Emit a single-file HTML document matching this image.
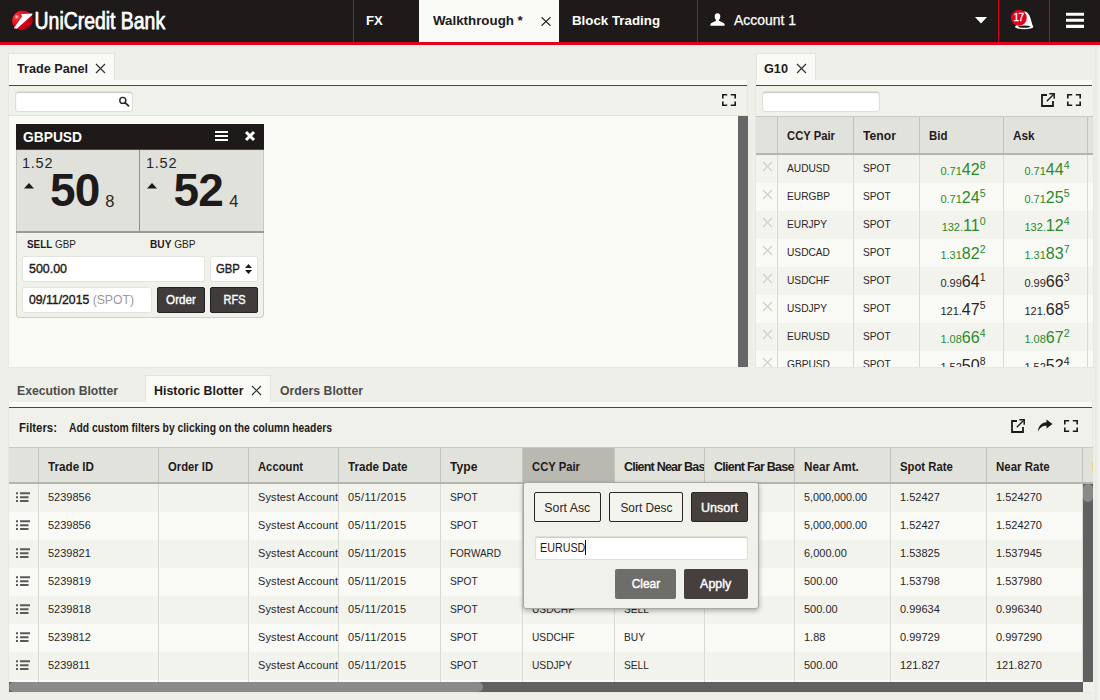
<!DOCTYPE html>
<html><head>
<meta charset="utf-8">
<title>UniCredit Bank</title>
<style>
*{box-sizing:border-box;margin:0;padding:0}
html,body{width:1100px;height:700px;overflow:hidden}
body{background:#efefe9;font-family:"Liberation Sans",sans-serif;color:#1f1a1a;position:relative;font-size:12px}
.abs{position:absolute}
/* header */
#hdr{position:absolute;left:0;top:0;width:1100px;height:42px;background:#1e1a1a}
#hdrline{position:absolute;left:0;top:42px;width:1100px;height:3px;background:#e2001a}
.vline{position:absolute;top:0;width:1px;height:42px;background:#d6001a}
.htab{position:absolute;top:0;height:42px;color:#fff;font-weight:bold;font-size:13.5px;line-height:42px;white-space:nowrap}
#wtab{position:absolute;left:419px;top:0;width:140px;height:42px;background:#f9f9f5}
/* panels */
.ptab{position:absolute;height:28px;background:#f9f9f5;border:1px solid #e4e4de;border-bottom:none;font-weight:bold;font-size:13px;line-height:27px;color:#1f1a1a;white-space:nowrap}
.panel{position:absolute;background:#f1f1eb;border:1px solid #e8e8e2}
.redline{position:absolute;height:1px;background:#e2001a}
.inp{position:absolute;background:#fff;border:1px solid #dfdfd9;border-radius:3px;box-shadow:inset 0 1px 1px rgba(0,0,0,.22)}
.t{position:absolute;white-space:nowrap}
.b{font-weight:bold}
.m{font-weight:normal;-webkit-text-stroke:0.4px}
/* tables */
.th{position:absolute;font-weight:bold;font-size:12.5px;white-space:nowrap}
.clip{overflow:hidden}
#hist .cell,#g10 .cell{line-height:26px}
#g10 .px{line-height:normal}
.row{position:absolute;height:28px}
.cell{position:absolute;font-size:11px;line-height:28px;white-space:nowrap;color:#2a2525}

.cb{position:absolute;width:1px;background:#dadad4}
.px{text-align:right;line-height:normal;height:28px;padding-top:5.5px}
.px .s1{font-size:11px}
.px .s2{font-size:16px}
.px .s3{font-size:10.5px;position:relative;top:-5.5px}
.btn{position:absolute;border-radius:2px;font-size:12.5px;text-align:center;white-space:nowrap}
</style>
</head>
<body>
<!-- HEADER -->
<div id="hdr"></div>
<div id="hdrline"></div>
<div id="wtab"></div>
<div class="vline" style="left:353px"></div>
<div class="vline" style="left:697px"></div>
<div class="vline" style="left:998px"></div>
<div class="vline" style="left:1049px"></div>
<div class="htab" style="left: 366px;"><span style="display: inline-block; transform-origin: 0px 50%; transform: scaleX(0.973);">FX</span></div>
<div class="htab" style="left: 433px; color: rgb(31, 26, 26);"><span style="display: inline-block; transform-origin: 0px 50%; transform: scaleX(0.987);">Walkthrough *</span></div>
<div class="htab" style="left: 572px;"><span style="display: inline-block; transform-origin: 0px 50%; transform: scaleX(0.986);">Block Trading</span></div>
<div class="htab" style="left: 734px; top: -1px; font-weight: normal; font-size: 14px; -webkit-text-stroke: 0.25px;"><span style="display: inline-block; transform-origin: 0px 50%; transform: scaleX(0.996);">Account 1</span></div>

<!-- HEADER ICONS -->
<svg class="abs" style="left:8px;top:6.3px" width="170" height="32" viewBox="8 6 170 32">
<defs><radialGradient id="sg" cx="0.30" cy="0.24" r="0.78"><stop offset="0" stop-color="#ffd0d0"></stop><stop offset="0.16" stop-color="#f0282e"></stop><stop offset="0.6" stop-color="#e2001a"></stop><stop offset="1" stop-color="#a80012"></stop></radialGradient></defs>
<ellipse cx="22.4" cy="20.3" rx="10.5" ry="9.8" fill="url(#sg)" transform="rotate(-20 22.4 20.3)"></ellipse>
<path d="M32.4 13.4 L21 14 L22.2 16.2 L13.8 28.2 L16.8 28.8 L32.2 15 Z" fill="#fff"></path>
<text x="34.6" y="29" font-family="Liberation Sans, sans-serif" font-size="23" fill="#fff" stroke="#fff" stroke-width="0.75" textLength="130.5" lengthAdjust="spacingAndGlyphs">UniCredit Bank</text>
</svg>
<svg class="abs" style="left:541px;top:17px" width="10" height="9" viewBox="0 0 10 9"><path d="M0.5 0.3 L9.5 8.7 M9.5 0.3 L0.5 8.7" stroke="#222" stroke-width="1.2" fill="none"></path></svg>
<svg class="abs" style="left:710px;top:13px" width="15" height="13" viewBox="0 0 15 13"><path d="M7.5 0.3 C9.6 0.3 10.3 2 10.3 3.6 C10.3 5.2 9.6 6.3 9 6.9 L9 7.8 L13.6 9.9 C14.3 10.3 14.6 10.9 14.6 11.6 L14.6 12.7 L0.4 12.7 L0.4 11.6 C0.4 10.9 0.7 10.3 1.4 9.9 L6 7.8 L6 6.9 C5.4 6.3 4.7 5.2 4.7 3.6 C4.7 2 5.4 0.3 7.5 0.3 Z" fill="#fff"></path></svg>
<svg class="abs" style="left:975px;top:17px" width="12" height="7" viewBox="0 0 12 7"><path d="M0 0 H12 L6 6.6 Z" fill="#fff"></path></svg>
<svg class="abs" style="left:1008px;top:8px" width="28" height="24" viewBox="1008 8 28 24">
<path d="M1016 26.5 C1018 22 1018.5 12 1024.5 11.5 C1030.5 12 1031 22 1033 26.5 Z" fill="#fff"></path>
<ellipse cx="1024.2" cy="26.8" rx="9.2" ry="2.4" fill="#fff"></ellipse>
<ellipse cx="1024.2" cy="26.6" rx="6.2" ry="1.2" fill="#1e1a1a"></ellipse>
<circle cx="1018.8" cy="17.8" r="8" fill="#e2001a"></circle>
<text x="1018.5" y="21.3" text-anchor="middle" font-family="Liberation Sans, sans-serif" font-size="10" fill="#fff" stroke="#fff" stroke-width="0.3" letter-spacing="-0.6">17</text>
</svg>
<svg class="abs" style="left:1066px;top:12px" width="18" height="17" viewBox="0 0 18 17"><path d="M0 2.3 H18 M0 8.3 H18 M0 14.4 H18" stroke="#fff" stroke-width="3.1"></path></svg>

<!-- TOP LEFT PANEL -->
<div class="ptab" style="left:8px;top:53px;width:107px"></div>
<div class="t b" style="left: 17px; top: 61px; font-size: 13px;"><span style="display: inline-block; transform-origin: 0px 50%; transform: scaleX(0.973);">Trade Panel</span></div>
<svg class="abs" style="left:95px;top:63px" width="11" height="11" viewBox="0 0 11 11"><path d="M1 1 L10 10 M10 1 L1 10" stroke="#333" stroke-width="1.2" fill="none"></path></svg>
<div class="panel" style="left:8px;top:80px;width:740px;height:288px"></div>
<div class="abs" style="left:9px;top:80px;width:738px;height:5px;background:#f9f9f5"></div>
<div class="redline" style="left:9px;top:85px;width:738px"></div>
<div class="abs" style="left:9px;top:86px;width:738px;height:30px;background:#f1f1eb;border-bottom:1px solid #e2e2dc"></div>
<div class="abs" style="left:9px;top:116px;width:729px;height:251px;background:#f9f9f5"></div>
<div class="abs" style="left:738px;top:116px;width:10px;height:251px;background:#666"></div>
<div class="inp" style="left:15px;top:91px;width:118px;height:21px"></div>
<svg class="abs" style="left:118px;top:96px" width="13" height="11" viewBox="0 0 13 11"><circle cx="4.8" cy="4.4" r="3" stroke="#222" stroke-width="1.4" fill="none"></circle><path d="M7 6.6 L10.6 9.8" stroke="#222" stroke-width="1.7" stroke-linecap="round"></path></svg>
<svg class="abs" style="left:722px;top:94px" width="14" height="12" viewBox="0 0 14 12"><path d="M0.8 4.6 V0.8 H5.2 M8.8 0.8 H13.2 V4.6 M13.2 7.4 V11.2 H8.8 M5.2 11.2 H0.8 V7.4" stroke="#1a1a1a" stroke-width="1.6" fill="none"></path></svg>

<!-- TRADE WIDGET -->
<div class="abs" style="left:16px;top:124px;width:248px;height:25px;background:#1e1a1a"></div>
<div class="abs" style="left:16px;top:149px;width:248px;height:1px;background:#e2001a"></div>
<div class="t b" style="left: 23px; top: 128.5px; font-size: 14px; color: rgb(255, 255, 255);"><span style="display: inline-block; transform-origin: 0px 50%; transform: scaleX(0.985);">GBPUSD</span></div>
<svg class="abs" style="left:215px;top:131px" width="13" height="10" viewBox="0 0 13 10"><path d="M0 1 H13 M0 5 H13 M0 9 H13" stroke="#fff" stroke-width="1.8"></path></svg>
<svg class="abs" style="left:244px;top:130px" width="12" height="12" viewBox="0 0 12 12"><path d="M2 2 L10 10 M10 2 L2 10" stroke="#fff" stroke-width="3"></path></svg>
<div class="abs" style="left:16px;top:150px;width:248px;height:81px;background:#e1e1db;border-left:1px solid #c9c9c3;border-right:1px solid #c9c9c3"></div>
<div class="abs" style="left:139px;top:150px;width:1px;height:81px;background:#8d8d88"></div>
<div class="abs" style="left:16px;top:231px;width:248px;height:2px;background:#9a9a95"></div>
<div class="abs" style="left:16px;top:233px;width:248px;height:85px;background:#f1f1eb;border:1px solid #d0d0ca;border-top:none;border-radius:0 0 4px 4px"></div>
<div class="t" style="left: 22px; top: 155px; font-size: 14.5px; color: rgb(42, 37, 37); letter-spacing: 0.76px;">1.52</div>
<div class="t" style="left: 146px; top: 155px; font-size: 14.5px; color: rgb(42, 37, 37); letter-spacing: 0.76px;">1.52</div>
<svg class="abs" style="left:24px;top:183px" width="10" height="6" viewBox="0 0 10 6"><path d="M0 5.5 L5 0 L10 5.5 Z" fill="#1e1a1a"></path></svg>
<svg class="abs" style="left:147px;top:183px" width="10" height="6" viewBox="0 0 10 6"><path d="M0 5.5 L5 0 L10 5.5 Z" fill="#1e1a1a"></path></svg>
<div class="t b" id="big1" style="left: 50px; top: 163px; font-size: 46px; color: rgb(30, 26, 26); letter-spacing: -0.8px;">50</div>
<div class="t b" id="big2" style="left: 173.5px; top: 163px; font-size: 46px; color: rgb(30, 26, 26); letter-spacing: -0.8px;">52</div>
<div class="t" style="left: 105.3px; top: 192px; font-size: 16.5px; color: rgb(42, 37, 37);">8</div>
<div class="t" style="left: 229.3px; top: 192px; font-size: 16.5px; color: rgb(42, 37, 37);">4</div>
<div class="t" style="left: 27px; top: 238px; font-size: 11px;"><span style="display: inline-block; transform-origin: 0px 50%; transform: scaleX(0.897);"><b>SELL</b> GBP</span></div>
<div class="t" style="left: 150px; top: 238px; font-size: 11px;"><span style="display: inline-block; transform-origin: 0px 50%; transform: scaleX(0.921);"><b>BUY</b> GBP</span></div>
<div class="inp" style="left:22px;top:256px;width:183px;height:26px;box-shadow:none;border-color:#e4e4de"></div>
<div class="t m" style="left: 29px; top: 262px; font-size: 12.5px;"><span style="display: inline-block; transform-origin: 0px 50%; transform: scaleX(0.994);">500.00</span></div>
<div class="inp" style="left:210px;top:256px;width:48px;height:26px;box-shadow:none;border-color:#e4e4de"></div>
<div class="t m" style="left: 216px; top: 262px; font-size: 12.5px;"><span style="display: inline-block; transform-origin: 0px 50%; transform: scaleX(0.905);">GBP</span></div>
<svg class="abs" style="left:245px;top:264px" width="7" height="10" viewBox="0 0 7 10"><path d="M0 3.9 L3.5 0 L7 3.9 Z M0 6.1 L3.5 10 L7 6.1 Z" fill="#1e1a1a"></path></svg>
<div class="inp" style="left:22px;top:287px;width:130px;height:26px;box-shadow:none;border-color:#e4e4de"></div>
<div class="t" style="left: 29px; top: 293px; font-size: 12.5px;"><span style="display: inline-block; transform-origin: 0px 50%; transform: scaleX(0.977);"><span class="m">09/11/2015</span> <span style="color:#999">(SPOT)</span></span></div>
<div class="btn" style="left: 157px; top: 287px; width: 48px; height: 26px; background: rgb(64, 60, 59); border: 1px solid rgb(34, 34, 34); color: rgb(255, 255, 255); line-height: 24px; font-size: 12.5px; font-weight: normal; -webkit-text-stroke: 0.4px;"><span style="display: inline-block; transform-origin: 50% 50%; transform: scaleX(0.933);">Order</span></div>
<div class="btn" style="left: 210px; top: 287px; width: 48px; height: 26px; background: rgb(64, 60, 59); border: 1px solid rgb(34, 34, 34); color: rgb(255, 255, 255); line-height: 24px; font-size: 12.5px; font-weight: normal; -webkit-text-stroke: 0.4px;"><span style="display: inline-block; transform-origin: 50% 50%; transform: scaleX(0.88);">RFS</span></div>

<!-- TOP RIGHT PANEL -->
<div class="ptab" style="left:756px;top:53px;width:60px"></div>
<div class="t b" style="left: 764px; top: 61px; font-size: 13px;"><span style="display: inline-block; transform-origin: 0px 50%; transform: scaleX(0.976);">G10</span></div>
<svg class="abs" style="left:796px;top:63px" width="11" height="11" viewBox="0 0 11 11"><path d="M1 1 L10 10 M10 1 L1 10" stroke="#333" stroke-width="1.2" fill="none"></path></svg>
<div class="panel" style="left:755px;top:80px;width:339px;height:288px"></div>
<div class="abs" style="left:756px;top:80px;width:336px;height:5px;background:#f9f9f5"></div>
<div class="redline" style="left:756px;top:85px;width:336px"></div>
<div class="abs" style="left:756px;top:86px;width:337px;height:30px;background:#f1f1eb"></div>
<div class="inp" style="left:762px;top:91px;width:118px;height:21px"></div>
<svg class="abs" style="left:1041px;top:93px" width="14" height="14" viewBox="0 0 14 14"><path d="M6 2 H1 V13 H12 V8" stroke="#1a1a1a" stroke-width="1.8" fill="none"></path><path d="M5.8 8.2 L13 1" stroke="#1a1a1a" stroke-width="1.3" fill="none"></path><path d="M8.3 0.8 H13.2 V5.7" stroke="#1a1a1a" stroke-width="1.5" fill="none"></path></svg>
<svg class="abs" style="left:1067px;top:94px" width="14" height="12" viewBox="0 0 14 12"><path d="M0.8 4.6 V0.8 H5.2 M8.8 0.8 H13.2 V4.6 M13.2 7.4 V11.2 H8.8 M5.2 11.2 H0.8 V7.4" stroke="#1a1a1a" stroke-width="1.6" fill="none"></path></svg>
<div class="abs" id="g10" style="left:756px;top:116px;width:337px;height:251px;overflow:hidden;background:#f9f9f5">
<div class="abs" style="left:0;top:0;width:337px;height:39px;background:#e2e2dc;border-top:1px solid #c8c8c2;border-bottom:2px solid #b4b4ae"></div>
<div class="row" style="left:0;top:39px;width:337px;background:#f3f3ee"><svg class="abs" style="left:5.5px;top:6px" width="11" height="11" viewBox="0 0 11 11"><path d="M1 1 L10 10 M10 1 L1 10" stroke="#cfcfc9" stroke-width="1.1" fill="none"></path></svg><div class="cell" style="left: 31px;"><span style="display: inline-block; transform-origin: 0px 50%; transform: scaleX(0.925);">AUDUSD</span></div><div class="cell" style="left: 107px;"><span style="display: inline-block; transform-origin: 0px 50%; transform: scaleX(0.925);">SPOT</span></div><div class="cell px" style="left:163.5px;width:66px;color:#2a8a2a"><span class="s1">0.71</span><span class="s2">42</span><span class="s3">8</span></div><div class="cell px" style="left:247.5px;width:66px;color:#2a8a2a"><span class="s1">0.71</span><span class="s2">44</span><span class="s3">4</span></div></div>
<div class="row" style="left:0;top:67px;width:337px;background:#f9f9f5"><svg class="abs" style="left:5.5px;top:6px" width="11" height="11" viewBox="0 0 11 11"><path d="M1 1 L10 10 M10 1 L1 10" stroke="#cfcfc9" stroke-width="1.1" fill="none"></path></svg><div class="cell" style="left: 31px;"><span style="display: inline-block; transform-origin: 0px 50%; transform: scaleX(0.925);">EURGBP</span></div><div class="cell" style="left: 107px;"><span style="display: inline-block; transform-origin: 0px 50%; transform: scaleX(0.925);">SPOT</span></div><div class="cell px" style="left:163.5px;width:66px;color:#2a8a2a"><span class="s1">0.71</span><span class="s2">24</span><span class="s3">5</span></div><div class="cell px" style="left:247.5px;width:66px;color:#2a8a2a"><span class="s1">0.71</span><span class="s2">25</span><span class="s3">5</span></div></div>
<div class="row" style="left:0;top:95px;width:337px;background:#f3f3ee"><svg class="abs" style="left:5.5px;top:6px" width="11" height="11" viewBox="0 0 11 11"><path d="M1 1 L10 10 M10 1 L1 10" stroke="#cfcfc9" stroke-width="1.1" fill="none"></path></svg><div class="cell" style="left: 31px;"><span style="display: inline-block; transform-origin: 0px 50%; transform: scaleX(0.925);">EURJPY</span></div><div class="cell" style="left: 107px;"><span style="display: inline-block; transform-origin: 0px 50%; transform: scaleX(0.925);">SPOT</span></div><div class="cell px" style="left:163.5px;width:66px;color:#2a8a2a"><span class="s1">132.</span><span class="s2">11</span><span class="s3">0</span></div><div class="cell px" style="left:247.5px;width:66px;color:#2a8a2a"><span class="s1">132.</span><span class="s2">12</span><span class="s3">4</span></div></div>
<div class="row" style="left:0;top:123px;width:337px;background:#f9f9f5"><svg class="abs" style="left:5.5px;top:6px" width="11" height="11" viewBox="0 0 11 11"><path d="M1 1 L10 10 M10 1 L1 10" stroke="#cfcfc9" stroke-width="1.1" fill="none"></path></svg><div class="cell" style="left: 31px;"><span style="display: inline-block; transform-origin: 0px 50%; transform: scaleX(0.925);">USDCAD</span></div><div class="cell" style="left: 107px;"><span style="display: inline-block; transform-origin: 0px 50%; transform: scaleX(0.925);">SPOT</span></div><div class="cell px" style="left:163.5px;width:66px;color:#2a8a2a"><span class="s1">1.31</span><span class="s2">82</span><span class="s3">2</span></div><div class="cell px" style="left:247.5px;width:66px;color:#2a8a2a"><span class="s1">1.31</span><span class="s2">83</span><span class="s3">7</span></div></div>
<div class="row" style="left:0;top:151px;width:337px;background:#f3f3ee"><svg class="abs" style="left:5.5px;top:6px" width="11" height="11" viewBox="0 0 11 11"><path d="M1 1 L10 10 M10 1 L1 10" stroke="#cfcfc9" stroke-width="1.1" fill="none"></path></svg><div class="cell" style="left: 31px;"><span style="display: inline-block; transform-origin: 0px 50%; transform: scaleX(0.925);">USDCHF</span></div><div class="cell" style="left: 107px;"><span style="display: inline-block; transform-origin: 0px 50%; transform: scaleX(0.925);">SPOT</span></div><div class="cell px" style="left:163.5px;width:66px;color:#2a2525"><span class="s1">0.99</span><span class="s2">64</span><span class="s3">1</span></div><div class="cell px" style="left:247.5px;width:66px;color:#2a2525"><span class="s1">0.99</span><span class="s2">66</span><span class="s3">3</span></div></div>
<div class="row" style="left:0;top:179px;width:337px;background:#f9f9f5"><svg class="abs" style="left:5.5px;top:6px" width="11" height="11" viewBox="0 0 11 11"><path d="M1 1 L10 10 M10 1 L1 10" stroke="#cfcfc9" stroke-width="1.1" fill="none"></path></svg><div class="cell" style="left: 31px;"><span style="display: inline-block; transform-origin: 0px 50%; transform: scaleX(0.925);">USDJPY</span></div><div class="cell" style="left: 107px;"><span style="display: inline-block; transform-origin: 0px 50%; transform: scaleX(0.925);">SPOT</span></div><div class="cell px" style="left:163.5px;width:66px;color:#2a2525"><span class="s1">121.</span><span class="s2">47</span><span class="s3">5</span></div><div class="cell px" style="left:247.5px;width:66px;color:#2a2525"><span class="s1">121.</span><span class="s2">68</span><span class="s3">5</span></div></div>
<div class="row" style="left:0;top:207px;width:337px;background:#f3f3ee"><svg class="abs" style="left:5.5px;top:6px" width="11" height="11" viewBox="0 0 11 11"><path d="M1 1 L10 10 M10 1 L1 10" stroke="#cfcfc9" stroke-width="1.1" fill="none"></path></svg><div class="cell" style="left: 31px;"><span style="display: inline-block; transform-origin: 0px 50%; transform: scaleX(0.925);">EURUSD</span></div><div class="cell" style="left: 107px;"><span style="display: inline-block; transform-origin: 0px 50%; transform: scaleX(0.925);">SPOT</span></div><div class="cell px" style="left:163.5px;width:66px;color:#2a8a2a"><span class="s1">1.08</span><span class="s2">66</span><span class="s3">4</span></div><div class="cell px" style="left:247.5px;width:66px;color:#2a8a2a"><span class="s1">1.08</span><span class="s2">67</span><span class="s3">2</span></div></div>
<div class="row" style="left:0;top:235px;width:337px;background:#f9f9f5"><svg class="abs" style="left:5.5px;top:6px" width="11" height="11" viewBox="0 0 11 11"><path d="M1 1 L10 10 M10 1 L1 10" stroke="#cfcfc9" stroke-width="1.1" fill="none"></path></svg><div class="cell" style="left: 31px;"><span style="display: inline-block; transform-origin: 0px 50%; transform: scaleX(0.925);">GBPUSD</span></div><div class="cell" style="left: 107px;"><span style="display: inline-block; transform-origin: 0px 50%; transform: scaleX(0.925);">SPOT</span></div><div class="cell px" style="left:163.5px;width:66px;color:#2a2525"><span class="s1">1.52</span><span class="s2">50</span><span class="s3">8</span></div><div class="cell px" style="left:247.5px;width:66px;color:#2a2525"><span class="s1">1.52</span><span class="s2">52</span><span class="s3">4</span></div></div>
<div class="cb" style="left:21px;top:1px;height:36px;background:#c4c4be"></div><div class="cb" style="left:21px;top:39px;height:230px"></div>
<div class="cb" style="left:97px;top:1px;height:36px;background:#c4c4be"></div><div class="cb" style="left:97px;top:39px;height:230px"></div>
<div class="cb" style="left:163px;top:1px;height:36px;background:#c4c4be"></div><div class="cb" style="left:163px;top:39px;height:230px"></div>
<div class="cb" style="left:247px;top:1px;height:36px;background:#c4c4be"></div><div class="cb" style="left:247px;top:39px;height:230px"></div>
<div class="cb" style="left:331px;top:1px;height:36px;background:#c4c4be"></div><div class="cb" style="left:331px;top:39px;height:230px"></div>
<div class="th" style="left: 31px; top: 13px;"><span style="display: inline-block; transform-origin: 0px 50%; transform: scaleX(0.901);">CCY Pair</span></div><div class="th" style="left: 107px; top: 13px;"><span style="display: inline-block; transform-origin: 0px 50%; transform: scaleX(0.973);">Tenor</span></div><div class="th" style="left: 173px; top: 13px;"><span style="display: inline-block; transform-origin: 0px 50%; transform: scaleX(0.914);">Bid</span></div><div class="th" style="left: 257px; top: 13px;"><span style="display: inline-block; transform-origin: 0px 50%; transform: scaleX(0.946);">Ask</span></div>
</div>

<!-- BOTTOM PANEL -->
<div class="t b" style="left: 17px; top: 383px; font-size: 13px; color: rgb(74, 74, 74);"><span style="display: inline-block; transform-origin: 0px 50%; transform: scaleX(0.938);">Execution Blotter</span></div>
<div class="ptab" style="left:145px;top:375px;width:126px;height:28px"></div>
<div class="t b" style="left: 154px; top: 383px; font-size: 13px;"><span style="display: inline-block; transform-origin: 0px 50%; transform: scaleX(0.953);">Historic Blotter</span></div>
<svg class="abs" style="left:251px;top:385px" width="11" height="11" viewBox="0 0 11 11"><path d="M1 1 L10 10 M10 1 L1 10" stroke="#333" stroke-width="1.2" fill="none"></path></svg>
<div class="t b" style="left: 280px; top: 383px; font-size: 13px; color: rgb(74, 74, 74);"><span style="display: inline-block; transform-origin: 0px 50%; transform: scaleX(0.942);">Orders Blotter</span></div>
<div class="panel" style="left:8px;top:402px;width:1085px;height:291px"></div>
<div class="abs" style="left:9px;top:402px;width:1083px;height:5px;background:#f9f9f5"></div>
<div class="redline" style="left:9px;top:407px;width:1083px"></div>
<div class="abs" style="left:9px;top:408px;width:1083px;height:39px;background:#f1f1eb"></div>
<div class="t b" style="left: 19px; top: 421px; font-size: 12px;"><span style="display: inline-block; transform-origin: 0px 50%; transform: scaleX(0.95);">Filters:</span></div>
<div class="t b" style="left: 69px; top: 421px; font-size: 12px;"><span style="display: inline-block; transform-origin: 0px 50%; transform: scaleX(0.861);">Add custom filters by clicking on the column headers</span></div>
<svg class="abs" style="left:1011px;top:419px" width="14" height="14" viewBox="0 0 14 14"><path d="M6 2 H1 V13 H12 V8" stroke="#1a1a1a" stroke-width="1.8" fill="none"></path><path d="M5.8 8.2 L13 1" stroke="#1a1a1a" stroke-width="1.3" fill="none"></path><path d="M8.3 0.8 H13.2 V5.7" stroke="#1a1a1a" stroke-width="1.5" fill="none"></path></svg>
<svg class="abs" style="left:1037px;top:419px" width="16" height="13" viewBox="0 0 16 13"><path d="M9.5 0.5 L15.5 5 L9.5 9.5 V6.8 C5.5 6.6 3 8.5 1 12.5 C1.2 7 4.5 3.6 9.5 3.2 Z" fill="#1a1a1a"></path></svg>
<svg class="abs" style="left:1064px;top:420px" width="14" height="12" viewBox="0 0 14 12"><path d="M0.8 4.6 V0.8 H5.2 M8.8 0.8 H13.2 V4.6 M13.2 7.4 V11.2 H8.8 M5.2 11.2 H0.8 V7.4" stroke="#1a1a1a" stroke-width="1.6" fill="none"></path></svg>
<div class="abs" id="hist" style="left:9px;top:447px;width:1084px;height:245px;overflow:hidden;background:#f9f9f5">
<div class="abs" style="left:0;top:0;width:1084px;height:37px;background:#e2e2dc;border-top:1px solid #c8c8c2;border-bottom:2px solid #b4b4ae"></div>
<div class="abs" style="left:513px;top:1px;width:93px;height:34px;background:#b9b9b2"></div>
<div class="row" style="left:0;top:37px;width:1074px;background:#f3f3ee"><svg class="abs" style="left:7px;top:8px" width="14" height="11" viewBox="0 0 14 11"><path d="M0 1.2 H2 M4 1.2 H14 M0 5.2 H2 M4 5.2 H12.5 M0 9.1 H2 M4 9.1 H12.5" stroke="#5a5a5a" stroke-width="2" fill="none"></path></svg><div class="cell" style="left: 39px; width: 110px;">5239856</div><div class="cell clip" style="left: 249px; width: 80px; letter-spacing: 0.12px;">Systest Account</div><div class="cell" style="left: 339px; width: 92px; letter-spacing: 0.44px;">05/11/2015</div><div class="cell" style="left: 441px; width: 72px;"><span style="display: inline-block; transform-origin: 0px 50%; transform: scaleX(0.925);">SPOT</span></div><div class="cell" style="left: 795px; width: 86px;"><span style="display: inline-block; transform-origin: 0px 50%; transform: scaleX(0.981);">5,000,000.00</span></div><div class="cell" style="left: 891px; width: 86px;">1.52427</div><div class="cell" style="left: 987px; width: 86px;">1.524270</div></div>
<div class="row" style="left:0;top:65px;width:1074px;background:#f9f9f5"><svg class="abs" style="left:7px;top:8px" width="14" height="11" viewBox="0 0 14 11"><path d="M0 1.2 H2 M4 1.2 H14 M0 5.2 H2 M4 5.2 H12.5 M0 9.1 H2 M4 9.1 H12.5" stroke="#5a5a5a" stroke-width="2" fill="none"></path></svg><div class="cell" style="left: 39px; width: 110px;">5239856</div><div class="cell clip" style="left: 249px; width: 80px; letter-spacing: 0.12px;">Systest Account</div><div class="cell" style="left: 339px; width: 92px; letter-spacing: 0.44px;">05/11/2015</div><div class="cell" style="left: 441px; width: 72px;"><span style="display: inline-block; transform-origin: 0px 50%; transform: scaleX(0.925);">SPOT</span></div><div class="cell" style="left: 795px; width: 86px;"><span style="display: inline-block; transform-origin: 0px 50%; transform: scaleX(0.981);">5,000,000.00</span></div><div class="cell" style="left: 891px; width: 86px;">1.52427</div><div class="cell" style="left: 987px; width: 86px;">1.524270</div></div>
<div class="row" style="left:0;top:93px;width:1074px;background:#f3f3ee"><svg class="abs" style="left:7px;top:8px" width="14" height="11" viewBox="0 0 14 11"><path d="M0 1.2 H2 M4 1.2 H14 M0 5.2 H2 M4 5.2 H12.5 M0 9.1 H2 M4 9.1 H12.5" stroke="#5a5a5a" stroke-width="2" fill="none"></path></svg><div class="cell" style="left: 39px; width: 110px;">5239821</div><div class="cell clip" style="left: 249px; width: 80px; letter-spacing: 0.12px;">Systest Account</div><div class="cell" style="left: 339px; width: 92px; letter-spacing: 0.44px;">05/11/2015</div><div class="cell" style="left: 441px; width: 72px;"><span style="display: inline-block; transform-origin: 0px 50%; transform: scaleX(0.907);">FORWARD</span></div><div class="cell" style="left: 795px; width: 86px;">6,000.00</div><div class="cell" style="left: 891px; width: 86px;">1.53825</div><div class="cell" style="left: 987px; width: 86px;">1.537945</div></div>
<div class="row" style="left:0;top:121px;width:1074px;background:#f9f9f5"><svg class="abs" style="left:7px;top:8px" width="14" height="11" viewBox="0 0 14 11"><path d="M0 1.2 H2 M4 1.2 H14 M0 5.2 H2 M4 5.2 H12.5 M0 9.1 H2 M4 9.1 H12.5" stroke="#5a5a5a" stroke-width="2" fill="none"></path></svg><div class="cell" style="left: 39px; width: 110px;">5239819</div><div class="cell clip" style="left: 249px; width: 80px; letter-spacing: 0.12px;">Systest Account</div><div class="cell" style="left: 339px; width: 92px; letter-spacing: 0.44px;">05/11/2015</div><div class="cell" style="left: 441px; width: 72px;"><span style="display: inline-block; transform-origin: 0px 50%; transform: scaleX(0.925);">SPOT</span></div><div class="cell" style="left: 795px; width: 86px;">500.00</div><div class="cell" style="left: 891px; width: 86px;">1.53798</div><div class="cell" style="left: 987px; width: 86px;">1.537980</div></div>
<div class="row" style="left:0;top:149px;width:1074px;background:#f3f3ee"><svg class="abs" style="left:7px;top:8px" width="14" height="11" viewBox="0 0 14 11"><path d="M0 1.2 H2 M4 1.2 H14 M0 5.2 H2 M4 5.2 H12.5 M0 9.1 H2 M4 9.1 H12.5" stroke="#5a5a5a" stroke-width="2" fill="none"></path></svg><div class="cell" style="left: 39px; width: 110px;">5239818</div><div class="cell clip" style="left: 249px; width: 80px; letter-spacing: 0.12px;">Systest Account</div><div class="cell" style="left: 339px; width: 92px; letter-spacing: 0.44px;">05/11/2015</div><div class="cell" style="left: 441px; width: 72px;"><span style="display: inline-block; transform-origin: 0px 50%; transform: scaleX(0.925);">SPOT</span></div><div class="cell" style="left: 523px; width: 82px;"><span style="display: inline-block; transform-origin: 0px 50%; transform: scaleX(0.925);">USDCHF</span></div><div class="cell" style="left: 615px; width: 80px;"><span style="display: inline-block; transform-origin: 0px 50%; transform: scaleX(0.925);">SELL</span></div><div class="cell" style="left: 795px; width: 86px;">500.00</div><div class="cell" style="left: 891px; width: 86px;">0.99634</div><div class="cell" style="left: 987px; width: 86px;">0.996340</div></div>
<div class="row" style="left:0;top:177px;width:1074px;background:#f9f9f5"><svg class="abs" style="left:7px;top:8px" width="14" height="11" viewBox="0 0 14 11"><path d="M0 1.2 H2 M4 1.2 H14 M0 5.2 H2 M4 5.2 H12.5 M0 9.1 H2 M4 9.1 H12.5" stroke="#5a5a5a" stroke-width="2" fill="none"></path></svg><div class="cell" style="left: 39px; width: 110px;">5239812</div><div class="cell clip" style="left: 249px; width: 80px; letter-spacing: 0.12px;">Systest Account</div><div class="cell" style="left: 339px; width: 92px; letter-spacing: 0.44px;">05/11/2015</div><div class="cell" style="left: 441px; width: 72px;"><span style="display: inline-block; transform-origin: 0px 50%; transform: scaleX(0.925);">SPOT</span></div><div class="cell" style="left: 523px; width: 82px;"><span style="display: inline-block; transform-origin: 0px 50%; transform: scaleX(0.925);">USDCHF</span></div><div class="cell" style="left: 615px; width: 80px;"><span style="display: inline-block; transform-origin: 0px 50%; transform: scaleX(0.925);">BUY</span></div><div class="cell" style="left: 795px; width: 86px;">1.88</div><div class="cell" style="left: 891px; width: 86px;">0.99729</div><div class="cell" style="left: 987px; width: 86px;">0.997290</div></div>
<div class="row" style="left:0;top:205px;width:1074px;background:#f3f3ee"><svg class="abs" style="left:7px;top:8px" width="14" height="11" viewBox="0 0 14 11"><path d="M0 1.2 H2 M4 1.2 H14 M0 5.2 H2 M4 5.2 H12.5 M0 9.1 H2 M4 9.1 H12.5" stroke="#5a5a5a" stroke-width="2" fill="none"></path></svg><div class="cell" style="left: 39px; width: 110px;">5239811</div><div class="cell clip" style="left: 249px; width: 80px; letter-spacing: 0.12px;">Systest Account</div><div class="cell" style="left: 339px; width: 92px; letter-spacing: 0.44px;">05/11/2015</div><div class="cell" style="left: 441px; width: 72px;"><span style="display: inline-block; transform-origin: 0px 50%; transform: scaleX(0.925);">SPOT</span></div><div class="cell" style="left: 523px; width: 82px;"><span style="display: inline-block; transform-origin: 0px 50%; transform: scaleX(0.925);">USDJPY</span></div><div class="cell" style="left: 615px; width: 80px;"><span style="display: inline-block; transform-origin: 0px 50%; transform: scaleX(0.925);">SELL</span></div><div class="cell" style="left: 795px; width: 86px;">500.00</div><div class="cell" style="left: 891px; width: 86px;">121.827</div><div class="cell" style="left: 987px; width: 86px;">121.8270</div></div>
<div class="cb" style="left:29px;top:1px;height:34px;background:#c4c4be"></div><div class="cb" style="left:29px;top:37px;height:198px"></div>
<div class="cb" style="left:149px;top:1px;height:34px;background:#c4c4be"></div><div class="cb" style="left:149px;top:37px;height:198px"></div>
<div class="cb" style="left:239px;top:1px;height:34px;background:#c4c4be"></div><div class="cb" style="left:239px;top:37px;height:198px"></div>
<div class="cb" style="left:329px;top:1px;height:34px;background:#c4c4be"></div><div class="cb" style="left:329px;top:37px;height:198px"></div>
<div class="cb" style="left:431px;top:1px;height:34px;background:#c4c4be"></div><div class="cb" style="left:431px;top:37px;height:198px"></div>
<div class="cb" style="left:513px;top:1px;height:34px;background:#c4c4be"></div><div class="cb" style="left:513px;top:37px;height:198px"></div>
<div class="cb" style="left:605px;top:1px;height:34px;background:#c4c4be"></div><div class="cb" style="left:605px;top:37px;height:198px"></div>
<div class="cb" style="left:695px;top:1px;height:34px;background:#c4c4be"></div><div class="cb" style="left:695px;top:37px;height:198px"></div>
<div class="cb" style="left:785px;top:1px;height:34px;background:#c4c4be"></div><div class="cb" style="left:785px;top:37px;height:198px"></div>
<div class="cb" style="left:881px;top:1px;height:34px;background:#c4c4be"></div><div class="cb" style="left:881px;top:37px;height:198px"></div>
<div class="cb" style="left:977px;top:1px;height:34px;background:#c4c4be"></div><div class="cb" style="left:977px;top:37px;height:198px"></div>
<div class="cb" style="left:1073px;top:1px;height:34px;background:#c4c4be"></div><div class="cb" style="left:1073px;top:37px;height:198px"></div>
<div class="th" style="left: 39px; top: 13px; width: 110px;"><span style="display: inline-block; transform-origin: 0px 50%; transform: scaleX(0.933);">Trade ID</span></div><div class="th" style="left: 159px; top: 13px; width: 80px;"><span style="display: inline-block; transform-origin: 0px 50%; transform: scaleX(0.9);">Order ID</span></div><div class="th" style="left: 249px; top: 13px; width: 80px;"><span style="display: inline-block; transform-origin: 0px 50%; transform: scaleX(0.9);">Account</span></div><div class="th" style="left: 339px; top: 13px; width: 92px;"><span style="display: inline-block; transform-origin: 0px 50%; transform: scaleX(0.931);">Trade Date</span></div><div class="th" style="left: 441px; top: 13px; width: 72px;"><span style="display: inline-block; transform-origin: 0px 50%; transform: scaleX(0.973);">Type</span></div><div class="th" style="left: 523px; top: 13px; width: 82px;"><span style="display: inline-block; transform-origin: 0px 50%; transform: scaleX(0.901);">CCY Pair</span></div><div class="th clip" style="left: 615px; top: 13px; width: 80px; letter-spacing: -0.79px;">Client Near Base</div><div class="th clip" style="left: 705px; top: 13px; width: 80px; letter-spacing: -0.76px;">Client Far Base</div><div class="th" style="left: 795px; top: 13px; width: 86px;"><span style="display: inline-block; transform-origin: 0px 50%; transform: scaleX(0.935);">Near Amt.</span></div><div class="th" style="left: 891px; top: 13px; width: 86px;"><span style="display: inline-block; transform-origin: 0px 50%; transform: scaleX(0.905);">Spot Rate</span></div><div class="th" style="left: 987px; top: 13px; width: 86px;"><span style="display: inline-block; transform-origin: 0px 50%; transform: scaleX(0.92);">Near Rate</span></div>
<div class="abs" style="left:1074px;top:37px;width:10px;height:198px;background:#606060"></div>
<div class="abs" style="left:1074px;top:37px;width:10px;height:18px;background:#8a8a8a;border-radius:5px"></div>
<div class="abs" style="left:1083px;top:15px;width:1px;height:9px;background:#e6cf8a"></div>
<div class="abs" style="left:0;top:235px;width:1074px;height:10px;background:#606060"></div>
<div class="abs" style="left:0;top:235px;width:474px;height:10px;background:#8a8a8a;border-radius:5px"></div>
<div class="abs" style="left:1074px;top:235px;width:10px;height:10px;background:#f1f1eb"></div>
</div>

<!-- POPUP -->
<div class="abs" style="left:523px;top:482px;width:236px;height:127px;background:#f1f1eb;border:1px solid #a8a8a2;border-radius:3px;box-shadow:0 2px 5px rgba(0,0,0,.3)"></div>
<div class="btn" style="left: 534px; top: 492px; width: 67px; height: 30px; border: 1px solid rgb(42, 37, 37); color: rgb(42, 37, 37); line-height: 30px; background: rgb(244, 244, 239);"><span style="display: inline-block; transform-origin: 50% 50%; transform: scaleX(0.988);">Sort Asc</span></div>
<div class="btn" style="left: 609px; top: 492px; width: 74px; height: 30px; border: 1px solid rgb(42, 37, 37); color: rgb(42, 37, 37); line-height: 30px; background: rgb(244, 244, 239);"><span style="display: inline-block; transform-origin: 50% 50%; transform: scaleX(0.946);">Sort Desc</span></div>
<div class="btn m" style="left: 691px; top: 492px; width: 57px; height: 30px; border: 1px solid rgb(42, 37, 37); color: rgb(255, 255, 255); line-height: 30px; background: rgb(69, 63, 62); font-size: 12.5px; letter-spacing: 0.03px;">Unsort</div>
<div class="inp" style="left:535px;top:536px;width:213px;height:24px;border-radius:2px"></div>
<div class="t" id="fin" style="left: 540px; top: 541px; font-size: 12px;"><span style="display: inline-block; transform-origin: 0px 50%; transform: scaleX(0.894);">EURUSD</span></div>
<div class="abs" style="left:585px;top:540px;width:1px;height:15px;background:#111"></div>
<div class="btn m" style="left: 615px; top: 569px; width: 61px; height: 30px; color: rgb(255, 255, 255); line-height: 31px; background: rgb(111, 109, 106); font-size: 12.5px;"><span style="display: inline-block; transform-origin: 50% 50%; transform: scaleX(0.954);">Clear</span></div>
<div class="btn m" style="left: 684px; top: 569px; width: 64px; height: 30px; color: rgb(255, 255, 255); line-height: 31px; background: rgb(69, 63, 62); font-size: 12.5px;"><span style="display: inline-block; transform-origin: 50% 50%; transform: scaleX(0.994);">Apply</span></div>

<div class="abs" style="left:1095px;top:45px;width:5px;height:655px;background:linear-gradient(to right,#e9e9e3,#f3f3ef)"></div>


</body></html>
